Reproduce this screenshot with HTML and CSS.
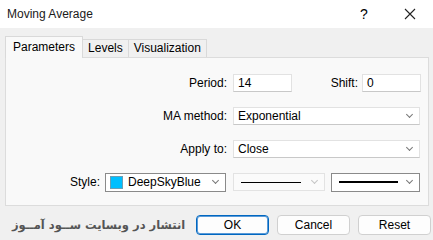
FILE: index.html
```html
<!DOCTYPE html>
<html lang="en">

<head>
  <meta charset="UTF-8">
  <title>Moving Average</title>
  <link rel="stylesheet" href="styles.css">
</head>

<body>
  <div class="dialog">
    <div class="title-bar">
      <span class="title">Moving Average</span>
      <span class="title-btn">?</span>
      <span class="title-btn close">
        <svg width="12" height="12" viewBox="0 0 12 12"><path d="M1 1 L11 11 M11 1 L1 11" stroke="#222" stroke-width="1.1" fill="none"/></svg>
      </span>
    </div>

    <div class="tabs">
      <span class="tab active">Parameters</span>
      <span class="tab">Levels</span>
      <span class="tab">Visualization</span>
    </div>

    <div class="panel">
      <div class="row">
        <label class="label">Period:</label>
        <div class="field short">14</div>
        <label class="label shift">Shift:</label>
        <div class="field short">0</div>
      </div>
      <div class="row">
        <label class="label">MA method:</label>
        <div class="field select wide">Exponential<span class="chev"></span></div>
      </div>
      <div class="row">
        <label class="label">Apply to:</label>
        <div class="field select wide">Close<span class="chev"></span></div>
      </div>
      <div class="row">
        <label class="label style-label">Style:</label>
        <div class="field select dark color-sel"><span class="swatch"></span>DeepSkyBlue<span class="chev"></span></div>
        <div class="field select line-sel"><span class="line thin"></span><span class="chev"></span></div>
        <div class="field select dark line-sel2"><span class="line thick"></span><span class="chev"></span></div>
      </div>
    </div>

    <div class="footer">
      <div class="brand-box">
        <span class="brand">انتشار در وبسایت ســود آمــوز</span>
      </div>
      <button class="btn default">OK</button>
      <button class="btn">Cancel</button>
      <button class="btn">Reset</button>
    </div>
  </div>
</body>

</html>
```

FILE: styles.css
```css
* {
  padding: 0;
  margin: 0;
  box-sizing: border-box;
}

body {
  width: 433px;
  height: 240px;
  overflow: hidden;
  background-color: #f0f0f0;
  font-family: "Liberation Sans", Arial, sans-serif;
  font-size: 12px;
  color: #000;
}

.title-bar {
  height: 28px;
  background-color: #fff;
  display: flex;
  align-items: center;
  padding-left: 7px;
}

.title {
  flex: 1;
  color: #1a1a1a;
}

.title-btn {
  width: 46px;
  font-size: 14px;
  display: flex;
  justify-content: center;
}

.tabs {
  display: flex;
  align-items: flex-end;
  padding-left: 5px;
  height: 29px;
}

.tab {
  height: 18px;
  line-height: 17px;
  padding: 0 5px;
  border: 1px solid #d9d9d9;
  border-bottom: none;
  border-left: none;
  background-color: #f0f0f0;
}

.tab.active {
  height: 22px;
  line-height: 20px;
  padding: 0 7px;
  border-left: 1px solid #d9d9d9;
  background-color: #f9f9f9;
  margin-bottom: -1px;
  position: relative;
  z-index: 1;
}

.panel {
  margin: 0 4px 0 5px;
  height: 149px;
  background-color: #f9f9f9;
  border: 1px solid #dcdcdc;
  padding-top: 16px;
}

.row {
  display: flex;
  align-items: center;
  height: 18px;
  margin-bottom: 15px;
}

.label {
  width: 227px;
  text-align: right;
  padding-right: 6px;
}

.label.shift {
  width: 70px;
  padding-right: 4px;
}

.label.style-label {
  width: 99px;
  padding-right: 5px;
}

.field {
  height: 18px;
  background-color: #fff;
  border: 1px solid #e2e2e2;
  border-bottom-color: #c8c8c8;
  padding-left: 4px;
  line-height: 16px;
  display: flex;
  align-items: center;
  position: relative;
}

.field.short {
  width: 59px;
}

.field.wide {
  width: 187px;
}

.select .chev {
  position: absolute;
  right: 7px;
  top: 4px;
  width: 5px;
  height: 5px;
  border-right: 1px solid #777;
  border-bottom: 1px solid #777;
  transform: rotate(45deg);
}

.field.dark {
  border: 1px solid #8a8a8a;
  height: 19px;
}

.color-sel {
  width: 121px;
  margin-right: 7px;
}

.swatch {
  width: 13px;
  height: 13px;
  background-color: #00bfff;
  border: 1px solid #6a9fb5;
  margin-right: 5px;
}

.line-sel {
  width: 92px;
  margin-right: 6px;
  background-color: #fbfbfb;
  border-color: #e3e3e3;
}

.line-sel .chev {
  border-color: #c4c4c4;
}

.line-sel2 {
  width: 89px;
}

.line {
  display: block;
  background-color: #000;
}

.line.thin {
  width: 60px;
  height: 1px;
  margin-left: 3px;
}

.line.thick {
  width: 59px;
  height: 2px;
  margin-left: 3px;
}

.footer {
  display: flex;
  align-items: center;
  height: 35px;
  padding-top: 3px;
}

.brand-box {
  width: 196px;
  flex-shrink: 0;
  padding-left: 12px;
}

.brand {
  font-family: "DejaVu Sans", sans-serif;
  font-weight: bold;
  font-size: 11.5px;
  color: #555;
  white-space: nowrap;
  direction: rtl;
}

.btn {
  width: 73px;
  height: 20px;
  margin-right: 8px;
  flex-shrink: 0;
  background-color: #fdfdfd;
  border: 1px solid #d0d0d0;
  border-radius: 4px;
  font-family: "Liberation Sans", Arial, sans-serif;
  font-size: 12px;
  color: #000;
}

.btn.default {
  border: 1px solid #0067c0;
  box-shadow: inset 0 0 0 1px #5a9ad8;
}
```
